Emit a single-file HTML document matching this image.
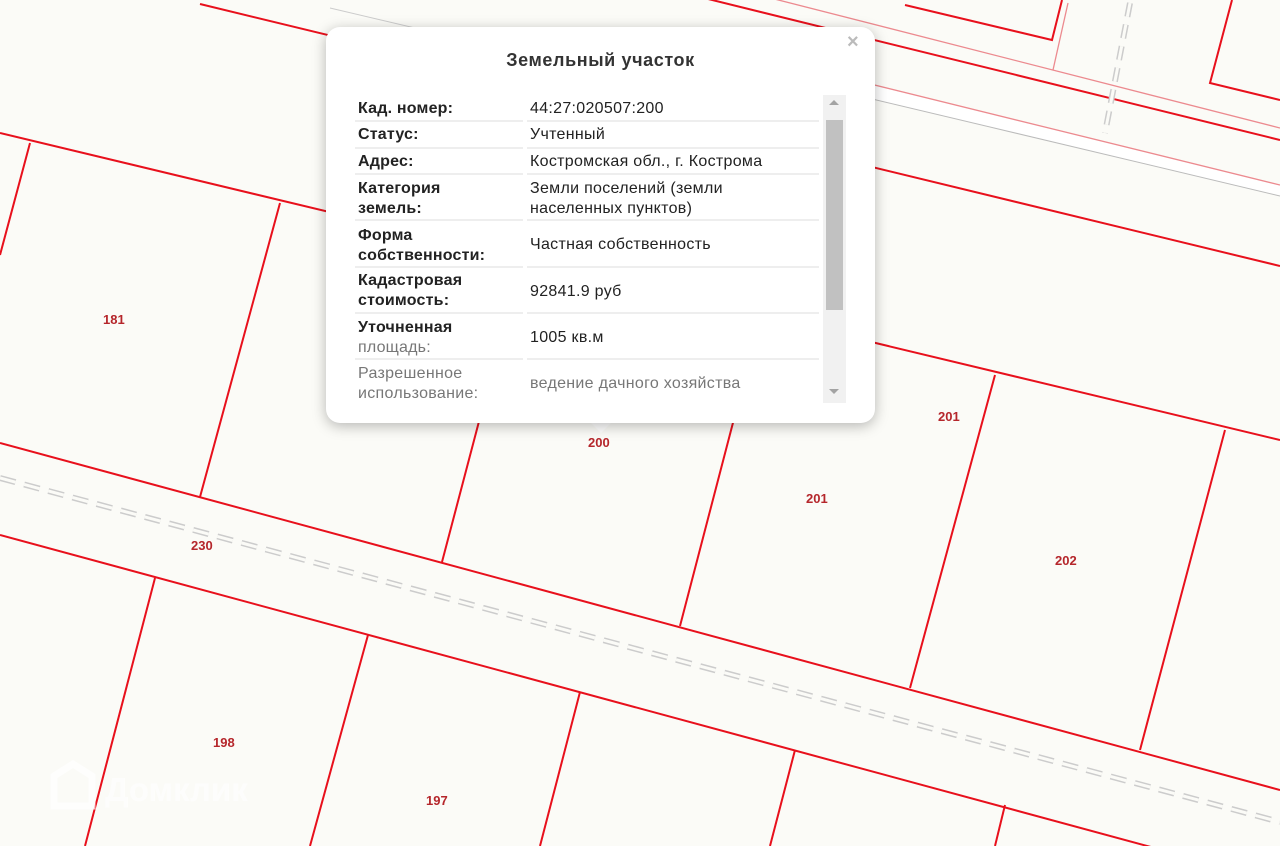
<!DOCTYPE html>
<html><head><meta charset="utf-8"><style>
body{margin:0;width:1280px;height:846px;overflow:hidden;background:#fbfbf7;font-family:"Liberation Sans",sans-serif;position:relative}
svg{position:absolute;left:0;top:0}
.lbl{font:bold 13px "Liberation Sans",sans-serif;fill:#b5262b}
.pop{position:absolute;left:326px;top:27px;width:549px;height:396px;background:#fff;border-radius:14px;box-shadow:0 3px 14px rgba(0,0,0,.28)}
.tail{position:absolute;left:588px;top:420px;width:0;height:0;border-left:13px solid transparent;border-right:13px solid transparent;border-top:13px solid #fff}
.title{position:absolute;left:0;width:549px;text-align:center;font-weight:bold;font-size:18px;letter-spacing:.6px;color:#333}
.close{position:absolute;font-size:20px;color:#bbb;font-weight:bold}
.t{position:absolute;font-size:16px;letter-spacing:.3px;line-height:20px;color:#222;white-space:nowrap}
.b{font-weight:bold;letter-spacing:.2px}
.hr{position:absolute;height:2px;background:#eee}
.g{color:#777}
</style></head><body>
<svg width="1280" height="846">
<g stroke="#e8101c" stroke-width="2" fill="none">
<line x1="0" y1="133" x2="1280" y2="440"/>
<line x1="200" y1="4" x2="1280" y2="266"/>
<line x1="700" y1="-3" x2="1280" y2="140"/>
<polyline points="905,5 1052,40 1062,0"/>
<polyline points="1232,0 1210,83 1280,100"/>
<line x1="0" y1="443" x2="1280" y2="790"/>
<line x1="0" y1="535" x2="1280" y2="882"/>
<line x1="30" y1="143" x2="0" y2="255"/>
<line x1="280" y1="203" x2="200" y2="497"/>
<line x1="482" y1="410" x2="442" y2="562"/>
<line x1="735" y1="415" x2="680" y2="626"/>
<line x1="995" y1="375" x2="910" y2="688"/>
<line x1="1225" y1="430" x2="1140" y2="750"/>
<line x1="155" y1="578" x2="85" y2="846"/>
<line x1="368" y1="635" x2="310" y2="846"/>
<line x1="580" y1="692" x2="540" y2="846"/>
<line x1="795" y1="750" x2="770" y2="846"/>
<line x1="1005" y1="805" x2="995" y2="846"/>
</g>
<g fill="none">
<line x1="700" y1="-20" x2="1280" y2="128" stroke="#ec8a8f" stroke-width="1.3"/>
<line x1="1068" y1="3" x2="1053" y2="70" stroke="#ec8a8f" stroke-width="1.3"/>
<polygon points="700,42 1280,185 1280,196 700,58" fill="#fff" stroke="none"/>
<line x1="700" y1="42" x2="1280" y2="185" stroke="#ec8a8f" stroke-width="1.3"/>
<line x1="700" y1="58" x2="1280" y2="196" stroke="#bbb" stroke-width="1"/>
<line x1="330" y1="8" x2="700" y2="95" stroke="#ccc" stroke-width="1"/>
<line x1="1130" y1="3" x2="1105" y2="133" stroke="#ccc" stroke-width="6" stroke-dasharray="14,8"/>
<line x1="1130" y1="3" x2="1105" y2="133" stroke="#fbfbf7" stroke-width="3" stroke-dasharray="14,8"/>
<line x1="0" y1="478" x2="1280" y2="822" stroke="#ccc" stroke-width="6" stroke-dasharray="16,9"/>
<line x1="0" y1="478" x2="1280" y2="822" stroke="#fbfbf7" stroke-width="3" stroke-dasharray="16,9"/>
</g>
<text class="lbl" x="103" y="324">181</text>
<text class="lbl" x="588" y="447">200</text>
<text class="lbl" x="938" y="421">201</text>
<text class="lbl" x="806" y="503">201</text>
<text class="lbl" x="1055" y="565">202</text>
<text class="lbl" x="191" y="550">230</text>
<text class="lbl" x="213" y="747">198</text>
<text class="lbl" x="426" y="805">197</text>
<text x="105" y="801" font-family="Liberation Sans" font-weight="bold" font-size="33" fill="#fff" opacity=".7">Домклик</text>
<path d="M54 806 V776 L73 764 L92 776 V806 Z" fill="none" stroke="#fff" stroke-width="7" opacity=".7"/>
</svg>
<div class="tail"></div>
<div class="pop">
<div class="title" style="top:23px">Земельный участок</div>
<div class="close" style="left:521px;top:4px">×</div>
</div>
<div style="position:absolute;left:823px;top:95px;width:23px;height:308px;background:#f1f1f1"></div>
<div style="position:absolute;left:826px;top:120px;width:17px;height:190px;background:#c1c1c1"></div>
<div style="position:absolute;left:829px;top:100px;border-left:5px solid transparent;border-right:5px solid transparent;border-bottom:5px solid #a3a3a3"></div>
<div style="position:absolute;left:829px;top:389px;border-left:5px solid transparent;border-right:5px solid transparent;border-top:5px solid #a3a3a3"></div>

<div class="t b" style="left:358px;top:99px">Кад. номер:</div><div class="t" style="left:530px;top:99px">44:27:020507:200</div>
<div class="t b" style="left:358px;top:125px">Статус:</div><div class="t" style="left:530px;top:125px">Учтенный</div>
<div class="t b" style="left:358px;top:152px">Адрес:</div><div class="t" style="left:530px;top:152px">Костромская обл., г. Кострома</div>
<div class="t b" style="left:358px;top:179px">Категория<br>земель:</div><div class="t" style="left:530px;top:179px">Земли поселений (земли<br>населенных пунктов)</div>
<div class="t b" style="left:358px;top:226px">Форма<br>собственности:</div><div class="t" style="left:530px;top:235px">Частная собственность</div>
<div class="t b" style="left:358px;top:271px">Кадастровая<br>стоимость:</div><div class="t" style="left:530px;top:282px">92841.9 руб</div>
<div class="t b" style="left:358px;top:318px">Уточненная<br><span class="g" style="font-weight:normal">площадь:</span></div><div class="t" style="left:530px;top:328px">1005 кв.м</div>
<div class="t g" style="left:358px;top:364px">Разрешенное<br>использование:</div><div class="t g" style="left:530px;top:374px">ведение дачного хозяйства</div>
<div class="hr" style="left:355px;top:120px;width:168px"></div><div class="hr" style="left:527px;top:120px;width:292px"></div>
<div class="hr" style="left:355px;top:147px;width:168px"></div><div class="hr" style="left:527px;top:147px;width:292px"></div>
<div class="hr" style="left:355px;top:173px;width:168px"></div><div class="hr" style="left:527px;top:173px;width:292px"></div>
<div class="hr" style="left:355px;top:219px;width:168px"></div><div class="hr" style="left:527px;top:219px;width:292px"></div>
<div class="hr" style="left:355px;top:266px;width:168px"></div><div class="hr" style="left:527px;top:266px;width:292px"></div>
<div class="hr" style="left:355px;top:312px;width:168px"></div><div class="hr" style="left:527px;top:312px;width:292px"></div>
<div class="hr" style="left:355px;top:358px;width:168px"></div><div class="hr" style="left:527px;top:358px;width:292px"></div>
</body></html>
